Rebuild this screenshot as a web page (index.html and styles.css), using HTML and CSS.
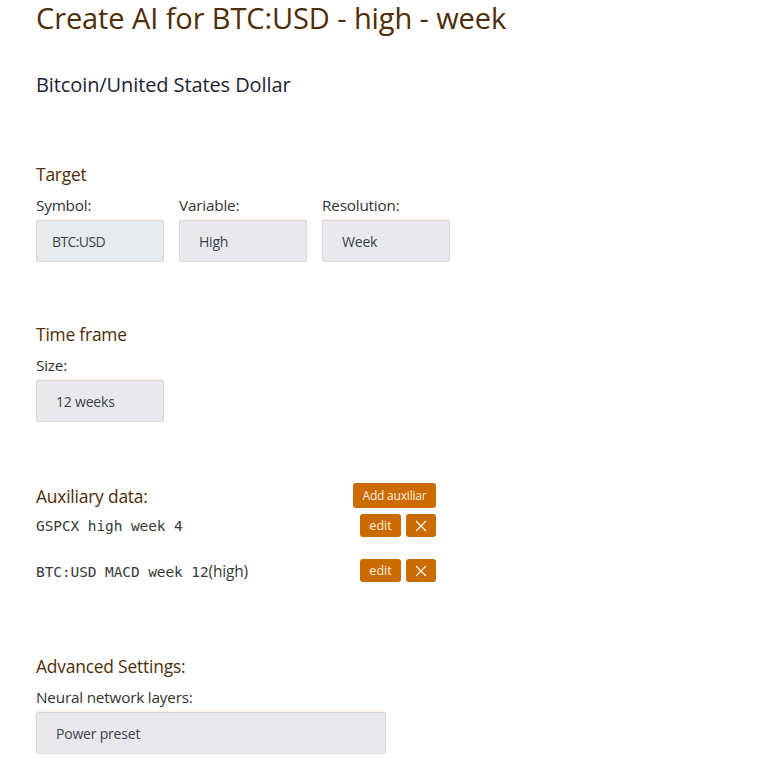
FILE: index.html
```html
<!DOCTYPE html>
<html>
<head>
<meta charset="utf-8">
<link rel="stylesheet" href="styles.css">
</head>
<body>
<main class="page">
  <h1 class="title">Create AI for BTC:USD - high - week</h1>
  <h2 class="subtitle">Bitcoin/United States Dollar</h2>

  <section class="section target">
    <h3 class="section-title">Target</h3>
    <div class="fields">
      <div class="field">
        <label class="label">Symbol:</label>
        <div class="box box-symbol">BTC:USD</div>
      </div>
      <div class="field">
        <label class="label">Variable:</label>
        <div class="box">High</div>
      </div>
      <div class="field">
        <label class="label">Resolution:</label>
        <div class="box">Week</div>
      </div>
    </div>
  </section>

  <section class="section timeframe">
    <h3 class="section-title">Time frame</h3>
    <div class="field">
      <label class="label">Size:</label>
      <div class="box">12 weeks</div>
    </div>
  </section>

  <section class="section aux">
    <div class="aux-head">
      <h3 class="section-title">Auxiliary data:</h3>
      <button class="btn btn-add">Add auxiliar</button>
    </div>
    <div class="aux-row">
      <span class="mono">GSPCX high week 4</span>
      <div class="actions">
        <button class="btn btn-edit">edit</button>
        <button class="btn btn-x"><svg width="12" height="12" viewBox="0 0 12 12"><path d="M1 1L11 11M11 1L1 11" stroke="#fff" stroke-width="1.1" fill="none"/></svg></button>
      </div>
    </div>
    <div class="aux-row row2">
      <span class="mono">BTC:USD MACD week 12<span class="sans">(high)</span></span>
      <div class="actions">
        <button class="btn btn-edit">edit</button>
        <button class="btn btn-x"><svg width="12" height="12" viewBox="0 0 12 12"><path d="M1 1L11 11M11 1L1 11" stroke="#fff" stroke-width="1.1" fill="none"/></svg></button>
      </div>
    </div>
  </section>

  <section class="section advanced">
    <h3 class="section-title">Advanced Settings:</h3>
    <div class="field">
      <label class="label">Neural network layers:</label>
      <div class="box box-wide">Power preset</div>
    </div>
  </section>
</main>
</body>
</html>
```
FILE: styles.css
```css
html, body {
  margin: 0;
  padding: 0;
  background: #ffffff;
}
body {
  font-family: "Open Sans", "Noto Sans", sans-serif;
  overflow: hidden;
}
.page {
  padding-left: 36px;
  padding-top: 2px;
}
.title {
  margin: 0;
  font-weight: 400;
  font-size: 29px;
  line-height: 32px;
  color: #4f2d06;
  letter-spacing: -0.1px;
}
.subtitle {
  margin: 38px 0 0 0;
  font-weight: 400;
  font-size: 20px;
  line-height: 26px;
  color: #1d2235;
  letter-spacing: -0.1px;
}
.section-title {
  margin: 0;
  font-weight: 400;
  font-size: 17.4px;
  line-height: 24px;
  color: #4f2d06;
  letter-spacing: -0.2px;
}
.target {
  margin-top: 64px;
}
.fields {
  display: flex;
  gap: 15px;
}
.field {
  display: flex;
  flex-direction: column;
}
.label {
  font-size: 15.3px;
  line-height: 20px;
  color: #333333;
  margin-top: 9px;
  margin-bottom: 5px;
  letter-spacing: -0.2px;
}
.box {
  box-sizing: border-box;
  width: 128px;
  height: 42px;
  background: #e9e9ed;
  border: 1px solid #dcdad8;
  border-radius: 2px;
  box-shadow: 0 -1px 2px rgba(230, 150, 70, 0.18);
  font-size: 14px;
  color: #3a3f4e;
  padding-left: 19px;
  display: flex;
  align-items: center;
  letter-spacing: -0.2px;
}
.box-symbol {
  background: #e8ebee;
  padding-left: 15px;
  letter-spacing: -0.6px;
}
.box-wide {
  width: 350px;
}
.timeframe {
  margin-top: 60px;
}
.aux {
  margin-top: 61px;
  width: 400px;
}
.aux-head {
  display: flex;
  justify-content: space-between;
  align-items: center;
  height: 25px;
}
.btn {
  border: none;
  background: #cc6b00;
  color: #fbeee0;
  font-family: "Open Sans", "Noto Sans", sans-serif;
  border-radius: 3px;
  padding: 0;
  display: inline-flex;
  align-items: center;
  justify-content: center;
}
.btn-add {
  width: 83px;
  height: 25px;
  font-size: 12px;
  letter-spacing: -0.2px;
}
.aux-row {
  display: flex;
  justify-content: space-between;
  align-items: center;
  height: 23px;
  margin-top: 6px;
}
.row2 {
  margin-top: 22px;
}
.actions {
  display: flex;
  gap: 5px;
}
.btn-edit {
  width: 41px;
  height: 23px;
  font-size: 12.5px;
}
.btn-x {
  width: 30px;
  height: 23px;
}
.mono {
  font-family: "DejaVu Sans Mono", "Liberation Mono", monospace;
  font-size: 14.5px;
  color: #3a3a3a;
  letter-spacing: -0.1px;
}
.sans {
  font-family: "Open Sans", "Noto Sans", sans-serif;
  font-size: 15.5px;
  letter-spacing: -0.2px;
}
.advanced {
  margin-top: 72px;
}
```
